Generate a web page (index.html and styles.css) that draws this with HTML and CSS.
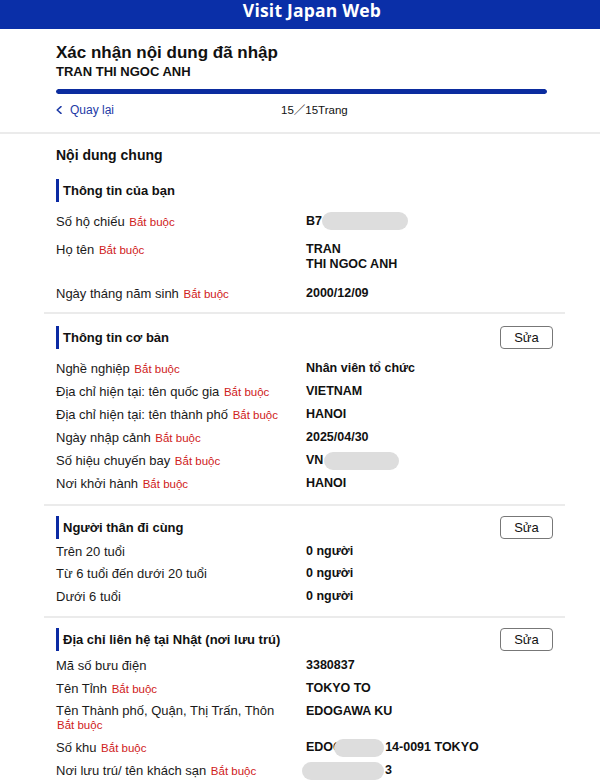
FILE: index.html
```html
<!DOCTYPE html>
<html lang="vi">
<head>
<meta charset="utf-8">
<title>Visit Japan Web</title>
<link rel="stylesheet" href="styles.css">
</head>
<body>
<header class="topbar">
  <div class="brand">Visit Japan Web</div>
</header>

<div class="intro">
  <h1 class="page-title">Xác nhận nội dung đã nhập</h1>
  <div class="person">TRAN THI NGOC ANH</div>
  <div class="progress"><div class="progress-fill"></div></div>
  <nav class="pager">
    <a class="back" href="#">
      <svg class="chev" width="6" height="8" viewBox="0 0 6 8"><polyline points="5,0.6 1.2,4 5,7.4" fill="none" stroke="#1d3aa6" stroke-width="1.5" stroke-linecap="round" stroke-linejoin="round"/></svg>
      Quay lại
    </a>
    <span class="count">15／15Trang</span>
  </nav>
</div>

<main class="content">
  <h2 class="group-title">Nội dung chung</h2>

  <section class="block block-first">
    <div class="block-head"><h3 class="block-title">Thông tin của bạn</h3></div>
    <div class="rows rows-wide">
      <div class="row"><div class="label">Số hộ chiếu <span class="req">Bắt buộc</span></div><div class="value">B7<span class="mask mask-pp"></span></div></div>
      <div class="row"><div class="label">Họ tên <span class="req">Bắt buộc</span></div><div class="value">TRAN<br>THI NGOC ANH</div></div>
      <div class="row"><div class="label">Ngày tháng năm sinh <span class="req">Bắt buộc</span></div><div class="value">2000/12/09</div></div>
    </div>
  </section>

  <section class="block block-basic">
    <div class="block-head"><h3 class="block-title">Thông tin cơ bản</h3><button class="edit">Sửa</button></div>
    <div class="rows">
      <div class="row"><div class="label">Nghề nghiệp <span class="req">Bắt buộc</span></div><div class="value">Nhân viên tổ chức</div></div>
      <div class="row"><div class="label">Địa chỉ hiện tại: tên quốc gia <span class="req">Bắt buộc</span></div><div class="value">VIETNAM</div></div>
      <div class="row"><div class="label">Địa chỉ hiện tại: tên thành phố <span class="req">Bắt buộc</span></div><div class="value">HANOI</div></div>
      <div class="row"><div class="label">Ngày nhập cảnh <span class="req">Bắt buộc</span></div><div class="value">2025/04/30</div></div>
      <div class="row"><div class="label">Số hiệu chuyến bay <span class="req">Bắt buộc</span></div><div class="value">VN<span class="mask mask-fl"></span></div></div>
      <div class="row"><div class="label">Nơi khởi hành <span class="req">Bắt buộc</span></div><div class="value">HANOI</div></div>
    </div>
  </section>

  <section class="block block-family">
    <div class="block-head"><h3 class="block-title">Người thân đi cùng</h3><button class="edit">Sửa</button></div>
    <div class="rows rows-tight">
      <div class="row"><div class="label">Trên 20 tuổi</div><div class="value">0 người</div></div>
      <div class="row"><div class="label">Từ 6 tuổi đến dưới 20 tuổi</div><div class="value">0 người</div></div>
      <div class="row"><div class="label">Dưới 6 tuổi</div><div class="value">0 người</div></div>
    </div>
  </section>

  <section class="block block-stay">
    <div class="block-head"><h3 class="block-title">Địa chỉ liên hệ tại Nhật (nơi lưu trú)</h3><button class="edit">Sửa</button></div>
    <div class="rows">
      <div class="row"><div class="label">Mã số bưu điện</div><div class="value">3380837</div></div>
      <div class="row"><div class="label">Tên Tỉnh <span class="req">Bắt buộc</span></div><div class="value">TOKYO TO</div></div>
      <div class="row"><div class="label label-wrap">Tên Thành phố, Quận, Thị Trấn, Thôn <span class="req">Bắt buộc</span></div><div class="value">EDOGAWA KU</div></div>
      <div class="row"><div class="label">Số khu <span class="req">Bắt buộc</span></div><div class="value">EDOC<span class="mask mask-addr"></span>14-0091 TOKYO</div></div>
      <div class="row"><div class="label">Nơi lưu trú/ tên khách sạn <span class="req">Bắt buộc</span></div><div class="value"><span class="mask mask-hotel"></span>3</div></div>
    </div>
  </section>
</main>
</body>
</html>
```

FILE: styles.css
```css
* {
  box-sizing: border-box;
}

body {
  margin: 0;
  background: #ffffff;
  color: #111111;
  font-family: "Liberation Sans", Arial, "Noto Sans CJK JP", sans-serif;
}

/* top brand bar */
.topbar {
  height: 29px;
  background: #0a2fa8;
  display: flex;
  justify-content: center;
  padding-left: 24px;
}

.brand {
  font-family: "Open Sans", "Noto Sans", sans-serif;
  font-weight: 700;
  font-size: 17.5px;
  line-height: 20px;
  color: #ffffff;
  letter-spacing: 0.2px;
}

/* page heading, progress and pager */
.intro {
  padding: 0 53px 14px 56px;
  border-bottom: 2px solid #ebebeb;
}

.page-title {
  margin: 14px 0 0;
  font-size: 17px;
  line-height: 20px;
  font-weight: 700;
  color: #111;
}

.person {
  margin-top: 1px;
  font-size: 13px;
  line-height: 15px;
  font-weight: 700;
  color: #111;
}

.progress {
  margin-top: 10px;
  height: 5px;
  border-radius: 3px;
  background: #e3e3e3;
  overflow: hidden;
}

.progress-fill {
  width: 100%;
  height: 100%;
  background: #0b2c9f;
  border-radius: 3px;
}

.pager {
  margin-top: 8px;
  display: grid;
  grid-template-columns: 225px auto;
  align-items: center;
  font-size: 12px;
  line-height: 16px;
}

.back {
  display: flex;
  align-items: center;
  color: #1d3aa6;
  text-decoration: none;
}

.chev {
  margin-right: 8px;
  flex: none;
}

.count {
  color: #111;
  font-size: 11.5px;
}

/* confirmation content */
.content {
  padding: 0 35px 0 44px;
}

.group-title {
  margin: 12px 0 0;
  padding-left: 12px;
  font-size: 14px;
  line-height: 18px;
  font-weight: 700;
  color: #111;
}

.block {
  padding: 12px 12px 12px;
  border-bottom: 2px solid #ebebeb;
}

.block-first {
  padding-top: 15px;
  padding-bottom: 11.5px;
}

.block-basic {
  padding-top: 12px;
  padding-bottom: 13px;
}

.block-family {
  padding-top: 10px;
  padding-bottom: 12.5px;
}

.block-stay {
  padding-top: 10px;
  border-bottom: none;
}

.block-head {
  height: 23px;
  display: flex;
  justify-content: space-between;
  align-items: stretch;
}

.block-title {
  margin: 0;
  border-left: 3px solid #0b2aa3;
  padding-left: 4px;
  font-size: 13px;
  line-height: 23px;
  font-weight: 700;
  color: #111;
}

.edit {
  width: 53px;
  height: 23px;
  padding: 0;
  border: 1px solid #777777;
  border-radius: 4px;
  background: #ffffff;
  font-family: "Liberation Sans", Arial, sans-serif;
  font-size: 13px;
  color: #111;
}

.rows {
  margin-top: 12px;
  display: flex;
  flex-direction: column;
  gap: 8px;
}

.rows-wide {
  margin-top: 11.5px;
  gap: 13.5px;
}

.rows-tight {
  margin-top: 4.5px;
  gap: 7.5px;
}

.block-stay .rows {
  margin-top: 7px;
}

.row {
  display: grid;
  grid-template-columns: 250px 1fr;
  align-items: start;
}

.label {
  font-size: 13px;
  line-height: 15px;
  color: #1a1a1a;
}

.label-wrap {
  line-height: 14px;
}

.req {
  margin-left: 1px;
  font-size: 11.5px;
  line-height: 1;
  white-space: nowrap;
  color: #cf2020;
}

.value {
  font-size: 12.5px;
  line-height: 15px;
  font-weight: 700;
  color: #111;
}

/* masked personal data; negative margins keep the line box at 15px */
.mask {
  display: inline-block;
  height: 18px;
  margin-top: -1.5px;
  margin-bottom: -1.5px;
  border-radius: 9px;
  background: #dddddd;
  vertical-align: top;
}

.mask-pp {
  width: 86px;
}

.mask-fl {
  width: 75px;
  margin-left: 1px;
}

.mask-addr {
  width: 50px;
  margin-left: -8px;
  margin-right: 1px;
}

.mask-hotel {
  width: 82px;
  margin-left: -4px;
  margin-right: 1px;
}
```
